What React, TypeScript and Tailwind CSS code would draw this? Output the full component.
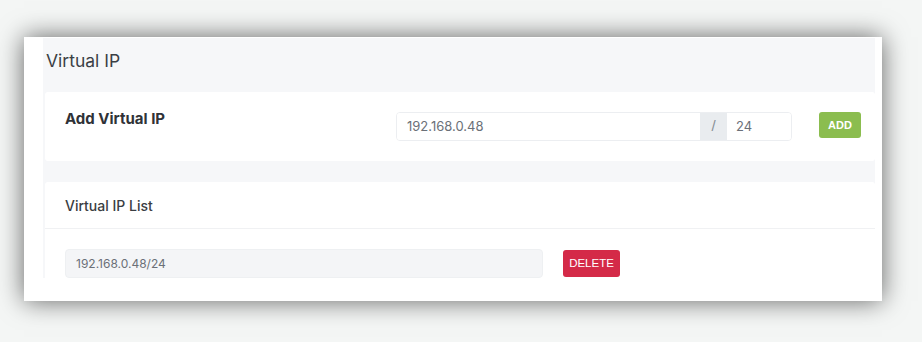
import React, { useState } from "react";

const VirtualIpPanel: React.FC = () => {
  const [ip, setIp] = useState("192.168.0.48");
  const [mask, setMask] = useState("24");
  const [list, setList] = useState<string[]>(["192.168.0.48/24"]);

  return (
    <div className="min-h-screen w-full bg-[#f4f6f5] pt-[37px] pl-[24px] font-['Inter',sans-serif]">
      <div className="w-[858px] h-[264px] bg-white shadow-[0_0_24px_rgba(0,0,0,0.6)] pl-[19px] pr-[7px] pt-[1px] pb-[23px]">
        <div className="h-full bg-[#f6f7f9] overflow-hidden">
          <h1 className="pl-[3px] pt-[11px] text-[17.5px] leading-6 text-[#3b3f45]">Virtual IP</h1>

          {/* add form */}
          <div className="ml-[2px] mt-[19px] h-[69px] bg-white rounded-[3px] flex items-start pl-[20px] pt-[17px]">
            <h2 className="w-[331px] text-[15px] leading-5 font-bold text-[#2f3237]">Add Virtual IP</h2>
            <div className="mt-[3px] w-[396px] h-[29px] flex border border-[#eceef1] rounded-[4px] overflow-hidden text-[13px] text-[#6b7078]">
              <input
                value={ip}
                onChange={(e) => setIp(e.target.value)}
                className="w-[303px] px-[10px] outline-none bg-white"
              />
              <span className="w-[27px] bg-[#e9ecef] flex items-center justify-center text-[#8a9097] font-['Liberation_Sans',sans-serif] text-[15px]">/</span>
              <input
                value={mask}
                onChange={(e) => setMask(e.target.value)}
                className="flex-1 min-w-0 px-[9px] outline-none bg-white"
              />
            </div>
            <button
              className="ml-[27px] mt-[3px] w-[42px] h-[26px] rounded-[3px] bg-[#8bbd4f] text-white text-[11px] font-bold font-['Liberation_Sans',sans-serif]"
              onClick={() => setList([...list, `${ip}/${mask}`])}
            >
              ADD
            </button>
          </div>

          {/* list */}
          <div className="ml-[2px] mt-[21px] bg-white rounded-t-[3px]">
            <div className="h-[47px] flex items-center pl-[20px] border-b border-[#f0f1f3]">
              <h2 className="text-[14px] font-medium text-[#3a3d42]">Virtual IP List</h2>
            </div>
            <div className="pl-[20px] pt-[20px] flex flex-col gap-3">
              {list.map((item, i) => (
                <div key={i} className="flex items-center">
                  <div className="w-[478px] h-[29px] bg-[#f4f5f7] border border-[#eef0f2] rounded-[4px] flex items-center pl-[10px] text-[12px] text-[#6b7078]">
                    {item}
                  </div>
                  <button
                    className="ml-[20px] w-[57px] h-[27px] rounded-[3px] bg-[#d42a48] text-white text-[11.5px] font-['Liberation_Sans',sans-serif]"
                    onClick={() => setList(list.filter((_, j) => j !== i))}
                  >
                    DELETE
                  </button>
                </div>
              ))}
            </div>
          </div>
        </div>
      </div>
    </div>
  );
};

export default function App() {
  return <VirtualIpPanel />;
}
